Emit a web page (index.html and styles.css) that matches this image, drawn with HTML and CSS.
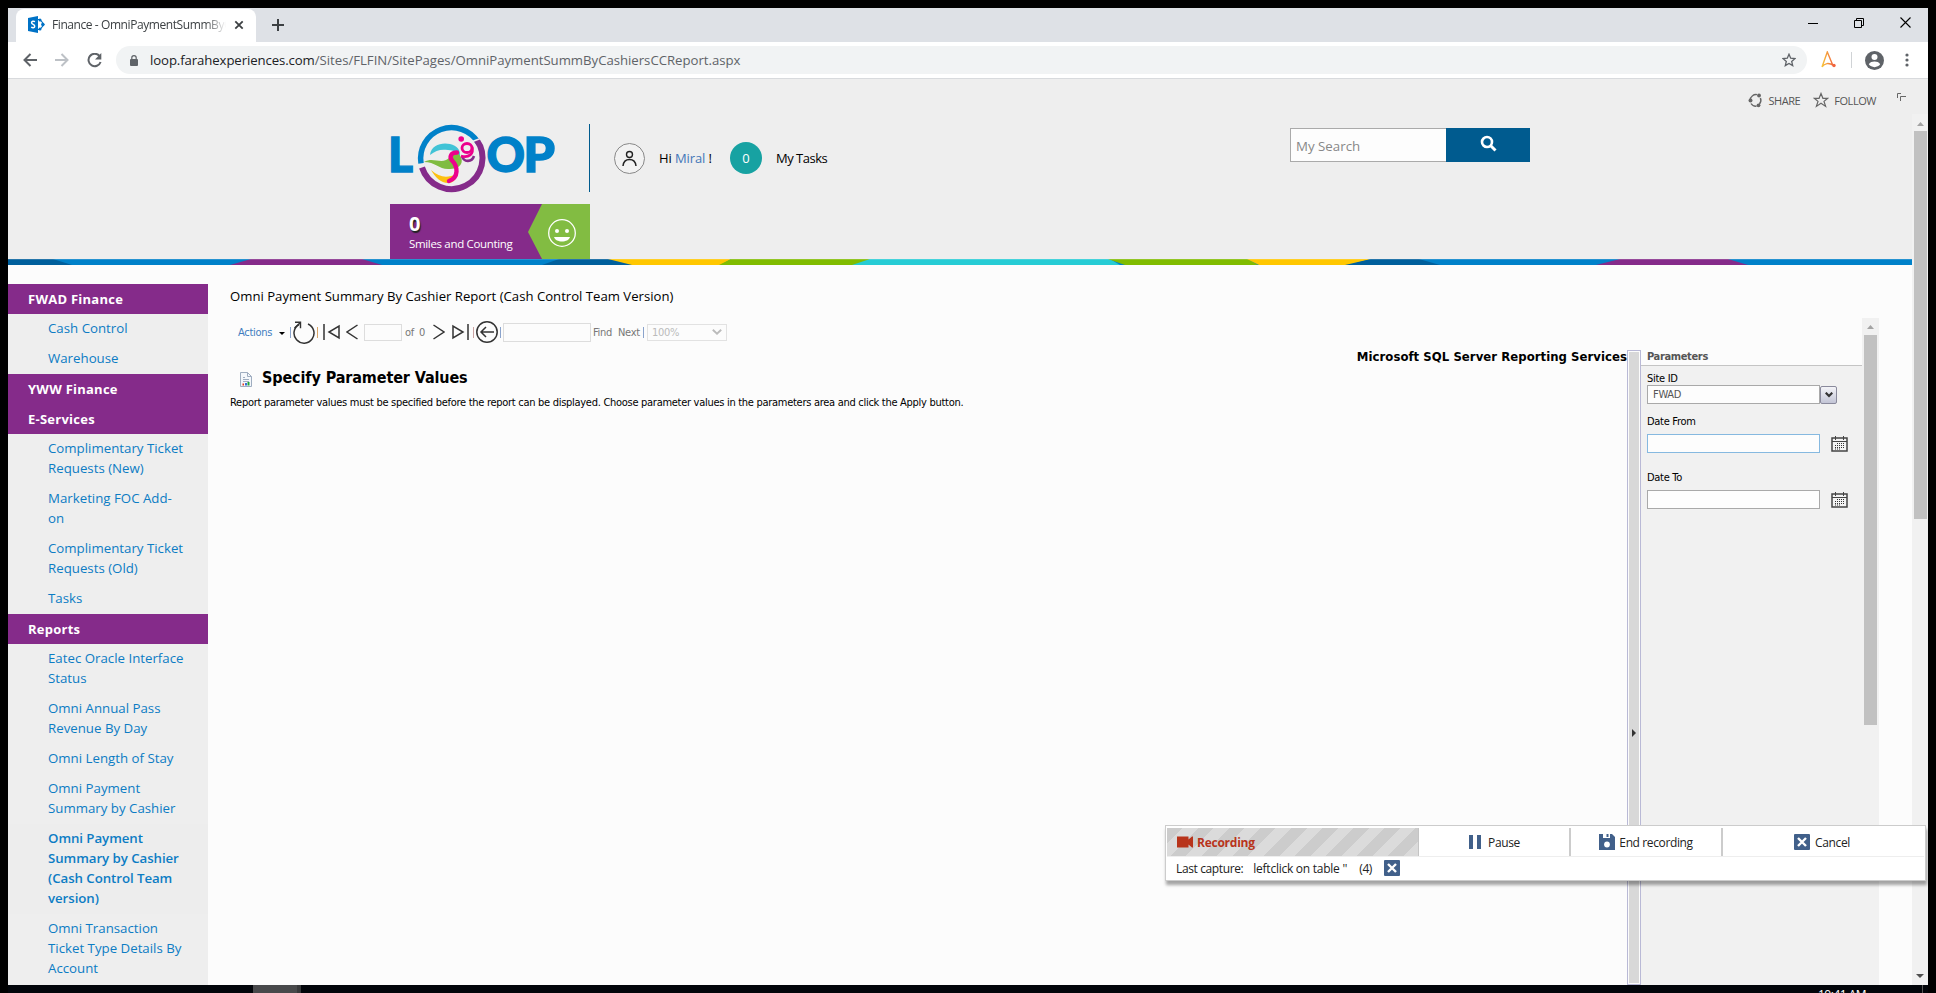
FILE: index.html
```html
<!DOCTYPE html>
<html lang="en">
<head>
<meta charset="utf-8">
<title>Finance - OmniPaymentSummByCashiersCCReport</title>
<link rel="stylesheet" href="styles.css">
</head>
<body>
<div class="window">
  <div class="tabstrip">
    <div class="tab">
      <svg class="tab-icon" width="17" height="17" viewBox="0 0 17 17"><path d="M9 3.500h3l4 5-4 5H9" fill="none" stroke="#0072c6" stroke-width="1.200"/><circle cx="12" cy="4" r="1.500" fill="#0072c6"/><circle cx="14.800" cy="8.500" r="1.700" fill="#0072c6"/><circle cx="12" cy="13" r="1.500" fill="#0072c6"/><path d="M0 2l10-2v17L0 15z" fill="#0072c6"/><path d="M7 5.600C5.500 4.800 3.600 5 3.600 6.700 3.600 8.600 6.700 8.300 6.700 10.200 6.700 12 4.500 12 3.200 11.200" fill="none" stroke="#fff" stroke-width="1.500"/></svg>
      <span class="tab-title">Finance - OmniPaymentSummByC</span>
      <svg width="10" height="10" viewBox="0 0 10 10"><path d="M1.300 1.300l7.400 7.400M8.700 1.300L1.300 8.700" stroke="#3c4043" stroke-width="1.800"/></svg>
    </div>
    <svg class="new-tab" width="12" height="12" viewBox="0 0 12 12"><path d="M6 0v12M0 6h12" stroke="#3c4043" stroke-width="2"/></svg>
    <div class="winctl">
      <svg width="10" height="10" viewBox="0 0 10 10"><path d="M0 5.500h10" stroke="#000"/></svg>
      <svg width="10" height="10" viewBox="0 0 10 10"><path d="M.5 2.500h7v7h-7zM2.500 2.500v-2h7v7h-2" fill="none" stroke="#000"/></svg>
      <svg width="11" height="11" viewBox="0 0 11 11"><path d="M.5.5l10 10M10.500.5l-10 10" stroke="#000" stroke-width="1.100"/></svg>
    </div>
  </div>
  <div class="toolbar">
    <svg class="nav-btn" width="14" height="14" viewBox="0 0 14 14"><path d="M14 7H1.500M7.500 1L1.500 7l6 6" fill="none" stroke="#5f6368" stroke-width="2"/></svg>
    <svg class="nav-btn" width="14" height="14" viewBox="0 0 14 14"><path d="M0 7h12.500M6.500 1l6 6-6 6" fill="none" stroke="#bdc1c6" stroke-width="2"/></svg>
    <svg class="nav-btn" width="15" height="15" viewBox="0 0 15 15"><path d="M12.500 3A6.200 6.200 0 1 0 13.600 9" fill="none" stroke="#5f6368" stroke-width="2"/><path d="M14.300 0v6.500H8z" fill="#5f6368"/></svg>
    <div class="omnibox">
      <svg width="8" height="11" viewBox="0 0 8 11"><path d="M1.800 5V2.800a2.200 2.200 0 0 1 4.400 0V5" fill="none" stroke="#5f6368" stroke-width="1.200"/><rect y="4" width="8" height="7" rx="1" fill="#5f6368"/></svg>
      <span class="url"><span class="host">loop.farahexperiences.com</span>/Sites/FLFIN/SitePages/OmniPaymentSummByCashiersCCReport.aspx</span>
      <svg class="fav" width="14" height="14" viewBox="0 0 14 14"><path d="M7 1.200l1.700 4 4.300.4-3.300 2.800 1 4.200L7 10.400l-3.700 2.200 1-4.200L1 5.600l4.300-.4z" fill="none" stroke="#5f6368" stroke-width="1.300"/></svg>
    </div>
    <svg class="ext" width="15" height="18" viewBox="0 0 15 18"><defs><linearGradient id="ext"><stop offset="0" stop-color="#f8c43a"/><stop offset="1" stop-color="#f0653f"/></linearGradient></defs><path d="M1 16L6.300 1l5.400 13M1 16C3.500 12 8 11.500 12.500 14.500" fill="none" stroke="url(#ext)" stroke-width="1.400"/><circle cx="13" cy="14.500" r="1.700" fill="#f0653f"/></svg>
    <i class="sep"></i>
    <svg class="profile" width="19" height="19" viewBox="0 0 19 19"><circle cx="9.500" cy="9.500" r="9.500" fill="#5f6368"/><circle cx="9.500" cy="6" r="3" fill="#fff"/><path d="M3.800 13.200c1-2 3.500-2.700 5.700-2.700s4.700.7 5.700 2.700a7 7 0 0 1-11.400 0z" fill="#fff"/></svg>
    <svg class="kebab" width="4" height="14" viewBox="0 0 4 14"><g fill="#5f6368"><circle cx="2" cy="2" r="1.600"/><circle cx="2" cy="7" r="1.600"/><circle cx="2" cy="12" r="1.600"/></g></svg>
  </div>

  <div class="suite">
    <svg width="15" height="15" viewBox="0 0 15 15"><path d="M4.500 2.700A5.700 5.700 0 0 1 9 1.600M12.400 5a5.700 5.700 0 0 1-1 6M8.500 13.200A5.700 5.700 0 0 1 3 10.500M2.200 7.500A5.700 5.700 0 0 1 4.500 2.700" fill="none" stroke="#666" stroke-width="1.400"/><circle cx="11" cy="2.500" r="1.900" fill="#666"/><circle cx="2.500" cy="7.500" r="2" fill="#666"/><circle cx="10.500" cy="12.300" r="1.900" fill="#666"/></svg>
    <span class="share">SHARE</span>
    <svg width="16" height="16" viewBox="0 0 16 16"><path d="M8 1.500l1.900 4.800h4.800L11 9.400l1.600 5L8 11.300l-4.600 3.100 1.600-5-3.700-3.100h4.800z" fill="none" stroke="#666" stroke-width="1.200"/></svg>
    <span class="follow">FOLLOW</span>
    <svg class="focus" width="9" height="8" viewBox="0 0 9 8"><path d="M.5 5V.500H4M3.500 8V3.500H9" fill="none" stroke="#666"/></svg>
  </div>

  <div class="viewport">
    <div class="page">
      <header class="masthead">
        <div class="brand">
          <div class="logo-cell">
            <svg class="logo" width="166" height="68" viewBox="0 0 166 68">
              <g class="wordmark"><text x="-2" y="47.500" textLength="25" lengthAdjust="spacingAndGlyphs">L</text><text x="96.500" y="47.500" textLength="38.500" lengthAdjust="spacingAndGlyphs">O</text><text x="133.500" y="47.500" textLength="31.500" lengthAdjust="spacingAndGlyphs">P</text></g>
              <path d="M31 39.400A31 31 0 0 1 88 18.300" fill="none" stroke="#0081c9" stroke-width="5.500"/>
              <path d="M86.500 15.700A31 31 0 1 1 32 43.500" fill="none" stroke="#852b8a" stroke-width="6"/>
              <path d="M82.500 17.500L93 13.500" stroke="#eee" stroke-width="1.500"/>
              <path d="M40 31c1-10 12-13 20-11 7 2 11 5 10 14-2-5-6-8-12-8-7-1-12 0-18 5z" fill="#41c3d6"/>
              <path d="M34 38c8-5 15 1 22-2 4-2 6-6 9-7 6 1 8 7 6 11-2 4-7 5-13 5-9 0-13-7-24-7z" fill="#7fbc41"/>
              <path d="M41 46c7 6 13 8 20 6 3-1 4-1 6-2-1 6-4 9-9 9-7 0-13-6-17-13z" fill="#fdc010"/>
              <path d="M67 28.500c-6 0-8 4-5 8 6 6 7 17-3 20.500" fill="none" stroke="#ec008c" stroke-width="4.400" stroke-linecap="round"/>
              <path d="M72 32c2 7 10 6 12 0" fill="none" stroke="#852b8a" stroke-width="2.600"/>
              <ellipse cx="77" cy="24" rx="5" ry="4.500" fill="none" stroke="#ec008c" stroke-width="2.800"/>
              <path d="M82 23c2 7-3 11-11 9" fill="none" stroke="#ec008c" stroke-width="2.800"/>
              <circle cx="71.200" cy="15" r="2.800" fill="#ec008c"/>
            </svg>
          </div>
          <div class="hello">
            <svg width="31" height="31" viewBox="0 0 31 31"><circle cx="15.500" cy="15.500" r="15" fill="#f2f2f2" stroke="#888"/><circle cx="15.500" cy="11.500" r="3" fill="none" stroke="#222" stroke-width="1.400"/><path d="M9 23c.5-5 3-6.500 6.500-6.500S21.500 18 22 23" fill="none" stroke="#222" stroke-width="1.500"/></svg>
            <span class="hi">Hi <a>Miral</a> !</span>
            <span class="count">0</span>
            <span class="tasks">My Tasks</span>
          </div>
          <div class="search">
            <div class="search-box">My Search</div>
            <div class="search-btn"><svg width="17" height="17" viewBox="0 0 17 17"><circle cx="7" cy="7" r="5" fill="none" stroke="#fff" stroke-width="2.600"/><path d="M10.500 10.500l5 5" stroke="#fff" stroke-width="3"/></svg></div>
          </div>
        </div>
        <div class="smiles">
          <div class="smiles-text"><b>0</b><span>Smiles and Counting</span></div>
          <svg width="62" height="55" viewBox="0 0 62 55"><path d="M14 0h48v55H14L0 28z" fill="#82bc42"/><circle cx="34" cy="29" r="13.300" fill="none" stroke="#fff" stroke-width="1.300"/><circle cx="29" cy="27" r="2" fill="#fff"/><circle cx="39" cy="27" r="2" fill="#fff"/><path d="M26 33h16c-1.500 6-14.500 6-16 0z" fill="#fff"/></svg>
        </div>
      </header>
      <svg class="stripe" width="1904" height="6" viewBox="0 0 1904 6">
        <path d="M0 0h1904v6H0z" fill="#0081c9"/>
        <path d="M0 0h45l19 6H0z" fill="#005f9c"/>
        <path d="M243 0h111l20 6H222z" fill="#852b8a"/>
        <path d="M551 0h65l10 6h-92z" fill="#005f9c"/>
        <path d="M600 0h123l-10 6h-89z" fill="#ffc700"/>
        <path d="M723 0h140l-10 6H711z" fill="#80bc00"/>
        <path d="M862 0h240l10 6H844z" fill="#26ccd5"/>
        <path d="M1100 0h140l10 6H1117z" fill="#80bc00"/>
        <path d="M1239 0h124l-22 6h-90z" fill="#ffc700"/>
        <path d="M1363 0h48l21 6h-95z" fill="#005f9c"/>
        <path d="M1612 0h108l20 6h-152z" fill="#852b8a"/>
        <path d="M0 .5h1904" stroke="#fff" stroke-opacity=".15"/>
      </svg>
      <div class="columns">
        <nav class="sidebar">
          <h3>FWAD Finance</h3>
          <a>Cash Control</a>
          <a>Warehouse</a>
          <h3>YWW Finance</h3>
          <h3>E-Services</h3>
          <a>Complimentary Ticket<br>Requests (New)</a>
          <a>Marketing FOC Add-<br>on</a>
          <a>Complimentary Ticket<br>Requests (Old)</a>
          <a>Tasks</a>
          <h3>Reports</h3>
          <a>Eatec Oracle Interface<br>Status</a>
          <a>Omni Annual Pass<br>Revenue By Day</a>
          <a>Omni Length of Stay</a>
          <a>Omni Payment<br>Summary by Cashier</a>
          <a class="current">Omni Payment<br>Summary by Cashier<br>(Cash Control Team<br>version)</a>
          <a>Omni Transaction<br>Ticket Type Details By<br>Account</a>
        </nav>
        <main class="main">
          <h1>Omni Payment Summary By Cashier Report (Cash Control Team Version)</h1>
          <div class="report">
            <div class="report-body">
              <div class="rtoolbar">
                <span class="actions">Actions</span>
                <svg class="caret" width="6" height="3" viewBox="0 0 6 3"><path d="M0 0h6L3 3z" fill="#000"/></svg>
                <i class="bar bar-refresh"></i>
                <svg width="22" height="24" viewBox="0 0 22 24"><path d="M6 4.500A10 10 0 1 0 15 4" fill="none" stroke="#333" stroke-width="1.500"/><path d="M2 2.200h5.500v6M7.500 2.500L1.500 8" fill="none" stroke="#333" stroke-width="1.400"/></svg>
                <i class="bar bar-nav"></i>
                <svg class="first" width="17" height="18" viewBox="0 0 17 18"><path d="M1 1v16M16 3v12L6 9z" fill="none" stroke="#333" stroke-width="1.500"/></svg>
                <svg class="prev" width="12" height="16" viewBox="0 0 12 16"><path d="M11.500 1L1 8l10.500 7" fill="none" stroke="#333" stroke-width="1.500"/></svg>
                <span class="page-in"></span>
                <span class="of">of</span><span class="total">0</span>
                <svg class="next" width="12" height="16" viewBox="0 0 12 16"><path d="M.5 1L11 8 .5 15" fill="none" stroke="#333" stroke-width="1.500"/></svg>
                <svg class="last" width="17" height="18" viewBox="0 0 17 18"><path d="M16 1v16M1 3v12l10-6z" fill="none" stroke="#333" stroke-width="1.500"/></svg>
                <i class="bar bar-back"></i>
                <svg width="22" height="22" viewBox="0 0 22 22"><circle cx="11" cy="11" r="10.200" fill="none" stroke="#333" stroke-width="1.500"/><path d="M18 11H5M10 6l-5 5 5 5" fill="none" stroke="#333" stroke-width="1.500"/></svg>
                <i class="bar bar-find"></i>
                <span class="find-in"></span>
                <span class="find">Find</span><span class="find-next">Next</span>
                <i class="bar bar-zoom"></i>
                <span class="zoom"><span>100%</span><svg width="10" height="6" viewBox="0 0 10 6"><path d="M.8.8L5 4.700 9.200.8" fill="none" stroke="#bbb" stroke-width="1.900"/></svg></span>
              </div>
              <div class="split">
                <section class="result">
                  <div class="vendor">Microsoft SQL Server Reporting Services</div>
                  <h2><svg width="12" height="15" viewBox="0 0 12 15"><path d="M.5.5h7l4 4v10H.5z" fill="#f4f7fb" stroke="#9fadc0"/><path d="M7.500.5v4h4M3 5.500h2M3 7.500h6M3 9.500h6" fill="none" stroke="#9fadc0"/><path d="M2.500 11.500h1.500V13.500H2.500z" fill="#e53c22"/><path d="M5 11h2v2.500H5z" fill="#3b6fd0"/><path d="M7.500 10h2v3.500h-2z" fill="#22a637"/></svg><span>Specify Parameter Values</span></h2>
                  <p>Report parameter values must be specified before the report can be displayed. Choose parameter values in the parameters area and click the Apply button.</p>
                </section>
                <div class="splitter"><i></i></div>
                <aside class="params">
                  <div class="params-head">Parameters</div>
                  <label class="l-site">Site ID</label>
                  <div class="field"><span class="input site">FWAD</span><span class="drop"><svg width="8" height="6" viewBox="0 0 8 6"><path d="M.7.7L4 4 7.300.7" fill="none" stroke="#333" stroke-width="2.200"/></svg></span></div>
                  <label class="l-from">Date From</label>
                  <div class="field"><span class="input focused"></span><svg class="cal" width="17" height="16" viewBox="0 0 17 16"><path d="M1 2h15v13H1z" fill="#f4f4f4" stroke="#444" stroke-width="1.500"/><path d="M1 5.500h15M4.500 0v4M12.500 0v4" stroke="#444"/><path d="M6 7.500h8M4 9.500h10M4 11.500h10M4 13h6" stroke="#333" stroke-dasharray="1 1"/></svg></div>
                  <label class="l-to">Date To</label>
                  <div class="field"><span class="input"></span><svg class="cal" width="17" height="16" viewBox="0 0 17 16"><path d="M1 2h15v13H1z" fill="#f4f4f4" stroke="#444" stroke-width="1.500"/><path d="M1 5.500h15M4.500 0v4M12.500 0v4" stroke="#444"/><path d="M6 7.500h8M4 9.500h10M4 11.500h10M4 13h6" stroke="#333" stroke-dasharray="1 1"/></svg></div>
                </aside>
              </div>
            </div>
            <div class="scroll inner"><svg width="7" height="4" viewBox="0 0 7 4"><path d="M0 4h7L3.500 0z" fill="#a3a3a3"/></svg><i></i></div>
          </div>
        </main>
      </div>
    </div>
    <div class="scroll outer"><svg width="7" height="4" viewBox="0 0 7 4"><path d="M0 4h7L3.500 0z" fill="#a3a3a3"/></svg><i></i><svg class="down" width="8" height="4" viewBox="0 0 8 4"><path d="M0 0h8L4 4z" fill="#505050"/></svg></div>
  </div>
</div>
<div class="taskbar"><i class="task"></i><i class="task-edge"></i><span class="clock">10:41 AM</span><i class="peek"></i></div>

<div class="recorder">
  <div class="rec-row">
    <div class="rec"><svg width="16" height="12" viewBox="0 0 16 12"><path d="M0 .5h11.500v3L15 .5h1v11h-1l-3.500-3v3H0z" fill="#b8341b"/></svg><span>Recording</span></div>
    <div class="rbtn pause"><svg width="12" height="14" viewBox="0 0 12 14"><path d="M0 0h4v14H0zM8 0h4v14H8z" fill="#41608a"/></svg><span>Pause</span></div>
    <div class="rbtn end"><svg width="16" height="16" viewBox="0 0 16 16"><path d="M0 0h13l3 3v13H0z" fill="#41608a"/><path d="M4 0h7v4H4z" fill="#fff"/><path d="M7.500 0h2v3h-2z" fill="#41608a"/><circle cx="8" cy="10.500" r="2.900" fill="#fff"/></svg><span>End recording</span></div>
    <div class="rbtn cancel"><svg width="16" height="16" viewBox="0 0 16 16"><rect width="16" height="16" rx="1" fill="#41608a"/><path d="M4 4l8 8M12 4l-8 8" stroke="#fff" stroke-width="2.400"/></svg><span>Cancel</span></div>
  </div>
  <div class="last-row"><span class="cap-label">Last capture:</span><span class="cap-text">leftclick on table ''</span><span>(4)</span><svg width="16" height="16" viewBox="0 0 16 16"><rect width="16" height="16" rx="1" fill="#41608a"/><path d="M4 4l8 8M12 4l-8 8" stroke="#fff" stroke-width="2.400"/></svg></div>
</div>
</body>
</html>
```
FILE: styles.css
```css
* { box-sizing: border-box; }
html, body { margin: 0; height: 993px; overflow: hidden; }
body { background: #000; font-family: "Open Sans", "Noto Sans", sans-serif; font-size: 13px; color: #000; padding: 8px 8px 0; }
svg { display: block; flex: none; }
h1, h2, h3, p { margin: 0; }
a { color: #0c7cc4; }

.window { width: 1920px; height: 977px; background: #eee; display: flex; flex-direction: column; overflow: hidden; }

/* Browser chrome */
.tabstrip { height: 34px; flex: none; background: #dee1e6; display: flex; align-items: flex-end; }
.tab { margin-left: 8px; width: 240px; height: 33px; background: #fff; border-radius: 8px 8px 0 0; display: flex; align-items: center; padding: 0 12px 2px; color: #3c4043; }
.tab-title { margin-left: 7px; width: 176px; overflow: hidden; white-space: nowrap; font-size: 12px; letter-spacing: -.42px; -webkit-mask-image: linear-gradient(90deg, #000 88%, transparent); mask-image: linear-gradient(90deg, #000 88%, transparent); margin-right: 8px; }
.new-tab { margin: 0 0 11px 16px; }
.winctl { margin-left: auto; display: flex; gap: 36px; align-self: flex-start; padding: 9px 17px 0 0; align-items: center; }
.toolbar { height: 37px; flex: none; background: #fff; border-bottom: 1px solid #d8dadd; display: flex; align-items: center; padding-left: 15px; }
.nav-btn { margin-right: 18px; }
.nav-btn + .nav-btn + .nav-btn { margin-right: 14px; }
.omnibox { width: 1691px; height: 28px; border-radius: 14px; background: #f1f3f4; display: flex; align-items: center; padding: 0 11px 0 14px; }
.url { margin-left: 12px; font-size: 13.200px; letter-spacing: -.02px; color: #5f6368; white-space: nowrap; }
.host { color: #202124; letter-spacing: -.1px; }
.fav { margin-left: auto; }
.ext { margin-left: 14px; }
.sep { width: 1px; height: 16px; background: #d0d3d6; margin: 0 13px 0 15px; }
.kebab { margin-left: 21px; }

/* Ribbon actions */
.suite { height: 35px; flex: none; display: flex; align-items: center; justify-content: flex-end; font-size: 11px; letter-spacing: -.45px; color: #555; padding: 7px 22px 0 0; }
.share { margin: 0 13px 0 6px; }
.follow { margin: 0 21px 0 5px; }
.focus { margin-bottom: 7px; }

.viewport { flex: 1; display: flex; min-height: 0; }
.page { width: 1904px; display: flex; flex-direction: column; overflow: hidden; }

/* Masthead */
.masthead { height: 145px; flex: none; width: 1140px; margin: 0 auto; padding-top: 10px; display: flex; flex-direction: column; justify-content: space-between; }
.brand { display: flex; height: 68px; }
.logo-cell { width: 200px; border-right: 1px solid #005b8e; }
.logo { overflow: visible; }
.wordmark { font-family: Lato, sans-serif; font-weight: 900; font-size: 48px; fill: #0081c9; stroke: #0081c9; stroke-width: 1.400px; }
.hello { display: flex; align-items: center; margin-left: 24px; width: 676px; }
.hi { margin-left: 14px; width: 57px; white-space: nowrap; letter-spacing: -.1px; }
.hello a { color: #4377b9; }
.count { width: 32px; height: 32px; margin-left: 14px; border-radius: 50%; background: #17a2a2; color: #fff; display: flex; align-items: center; justify-content: center; }
.tasks { margin-left: 14px; letter-spacing: -.5px; }
.search { display: flex; height: 34px; margin-top: 4px; }
.search-box { width: 156px; background: #fdfdfd; border: 1px solid #aaa; border-right: 0; padding: 2px 5px 0; display: flex; align-items: center; font-size: 13.300px; color: #888; }
.search-btn { width: 84px; background: #005b8f; display: flex; justify-content: center; padding: 7px 0 0; }
.smiles { width: 200px; height: 55px; background: #852b8a; color: #fff; display: flex; justify-content: space-between; }
.smiles-text { padding: 7px 0 0 19px; font-size: 11.500px; line-height: 16px; letter-spacing: -.33px; white-space: nowrap; display: flex; flex-direction: column; }
.smiles-text b { font-size: 20px; line-height: 25px; text-shadow: 1px 2px 1px #222; }
.stripe { flex: none; }

/* Columns */
.columns { flex: 1; background: #fcfcfc; display: flex; padding-top: 19px; min-height: 0; }
.sidebar { width: 200px; background: #eee; font-size: 13.270px; line-height: 20px; white-space: nowrap; overflow: hidden; }
.sidebar h3 { background: #852b8a; color: #fff; font-size: 13px; line-height: 20px; letter-spacing: .25px; padding: 5px 20px; }
.sidebar a { display: block; padding: 4px 0 6px 40px; }
.sidebar .current { font-weight: 600; background: #ededed; letter-spacing: -.06px; }
.main { flex: 1; padding: 0 0 0 22px; display: flex; flex-direction: column; min-width: 0; }
.main h1 { font-size: 13.150px; font-weight: normal; line-height: 25px; height: 34px; }
.report { width: 1649px; flex: 1; display: flex; min-height: 0; font-family: "DejaVu Sans Condensed", "DejaVu Sans", sans-serif; font-size: 11px; letter-spacing: -.285px; }
.report-body { flex: 1; display: flex; flex-direction: column; min-width: 0; }

.rtoolbar { height: 32px; flex: none; display: flex; align-items: center; padding: 0 0 4px 8px; color: #777; white-space: nowrap; }
.actions { width: 41px; color: #3f7cbf; }
.caret { margin: 3px 5px 0 0; }
.bar { width: 1px; height: 11px; flex: none; }
.bar-refresh { background: #8aa3cc; margin-right: 2px; }
.bar-nav { background: #d9a66a; margin: 0 5px 0 2px; }
.prev { margin: 0 6px 0 6px; }
.page-in { width: 38px; height: 17px; border: 1px solid #ddd; margin-right: 3px; }
.of { width: 14px; }
.total { width: 14px; }
.last { margin: 0 4px 0 7px; }
.bar-back { margin-right: 2px; background: #c9a2a2; }
.bar-find { margin: 0 2px; background: #8aa3cc; }
.find-in { width: 88px; height: 19px; border: 1px solid #ddd; margin-right: 2px; }
.find { width: 25px; }
.find-next { width: 25px; }
.bar-zoom { margin-right: 3px; background: #8aa3cc; }
.zoom { width: 80px; height: 17px; border: 1px solid #e2e2e2; color: #bbb; display: flex; align-items: center; justify-content: space-between; padding: 0 4px; }

.split { flex: 1; display: flex; min-height: 0; }
.result { flex: 1; min-width: 0; white-space: nowrap; }
.vendor { text-align: right; font-size: 13px; font-weight: bold; line-height: 14px; height: 16px; letter-spacing: .04px; }
.result h2 { font-size: 16px; line-height: 22px; letter-spacing: -.11px; display: flex; align-items: center; height: 24px; }
.result h2 svg { margin: 3px 10px 0 10px; }
.result p { line-height: 14px; margin-top: 6px; }
.splitter { width: 14px; border: 1px solid #b9b9d6; background: #d8d8d8; box-shadow: inset 0 0 0 1px #fcfcfc; display: flex; align-items: center; justify-content: center; padding-top: 130px; }
.splitter i { border: 4px solid transparent; border-left-color: #333; border-right: 0; }
.params { width: 221px; background: #f1f1f1; }
.params-head { height: 16px; background: #fcfcfc; border-bottom: 1px solid #c4c4c4; font-weight: bold; color: #555; line-height: 14px; letter-spacing: -.35px; }
.params-head, .params label { padding-left: 6px; display: block; }
.params label { line-height: 14px; }
.params .l-site { padding-top: 6px; line-height: 13px; }
.l-from { padding-top: 11px; }
.l-to { padding-top: 18px; }
.field { display: flex; align-items: center; padding-left: 6px; }
.l-from + .field, .l-to + .field { margin-top: 5px; }
.input { width: 173px; height: 19px; background: #fdfdfd; border: 1px solid #a9a9a9; padding-left: 5px; line-height: 18px; color: #555; }
.input.focused { border-color: #86b9e0; }
.drop { width: 17px; height: 18px; border: 1px solid #8a8a9c; border-radius: 2px; background: linear-gradient(#f4f4f8, #c3c5d6); display: flex; align-items: center; justify-content: center; }
.cal { margin-left: 11px; }

/* Scrollbars */
.scroll { background: #f1f1f1; display: flex; flex-direction: column; align-items: center; flex: none; }
.scroll i { background: #c1c1c1; }
.inner { width: 17px; padding-top: 7px; }
.inner i { width: 13px; height: 390px; margin-top: 6px; }
.outer { width: 16px; padding-top: 8px; }
.outer i { width: 13px; height: 388px; margin-top: 5px; }
.down { margin-top: auto; margin-bottom: 7px; }

/* Desktop taskbar, mostly below the fold */
.taskbar { height: 8px; display: flex; padding-left: 245px; overflow: hidden; background: #02050a; }
.task { width: 44px; background: #48494b; }
.task-edge { width: 4px; background: #37383a; }
.clock { margin-left: 1517px; color: #fff; font-size: 12px; line-height: 16px; letter-spacing: -.5px; padding-top: 2px; white-space: nowrap; }
.peek { width: 1px; background: #555; margin-left: auto; margin-right: 5px; }

/* Recorder overlay */
.recorder { position: absolute; left: 1165px; top: 825px; width: 761px; height: 56px; background: #fff; border: 1px solid #ccc; box-shadow: 1px 4px 3px rgba(0,0,0,.35); padding: 2px 1px; color: #222; font-size: 12px; letter-spacing: -.38px; }
.rec-row { display: flex; height: 29px; border-bottom: 1px solid #eee; }
.rec { width: 252px; background: repeating-linear-gradient(135deg, #ccc 0 11px, #dbdbdb 11px 22px); border-right: 1px solid #c4c4c4; display: flex; align-items: center; gap: 4px; padding-left: 10px; color: #b8341b; font-weight: bold; letter-spacing: -.25px; }
.rbtn { width: 152px; border-right: 2px solid #ccc; display: flex; align-items: center; justify-content: center; gap: 7px; }
.pause { padding-left: 1px; }
.end { gap: 4px; }
.cancel { flex: 1; border-right: 0; gap: 5px; padding-right: 3px; }
.last-row { display: flex; align-items: center; height: 22px; padding-left: 9px; }
.cap-label { margin-right: 10px; }
.cap-text { margin-right: 12px; letter-spacing: -.25px; }
.last-row svg { margin-left: 12px; }
```
